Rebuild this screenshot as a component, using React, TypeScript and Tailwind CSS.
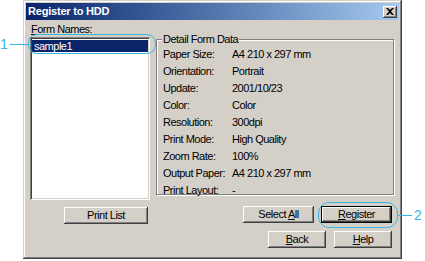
import React from 'react';

const rows: [string, string][] = [
  ['Paper Size:', 'A4 210 x 297 mm'],
  ['Orientation:', 'Portrait'],
  ['Update:', '2001/10/23'],
  ['Color:', 'Color'],
  ['Resolution:', '300dpi'],
  ['Print Mode:', 'High Quality'],
  ['Zoom Rate:', '100%'],
  ['Output Paper:', 'A4 210 x 297 mm'],
  ['Print Layout:', '-'],
];

const raised =
  'shadow-[inset_-1px_-1px_#404040,inset_1px_1px_#ffffff,inset_-2px_-2px_#808080,inset_2px_2px_#d4d0c8]';

function Button({ children, className = '', def = false }: { children: React.ReactNode; className?: string; def?: boolean }) {
  return (
    <div className={`${def ? 'p-px bg-black' : ''} ${className}`}>
      <div className={`h-full w-full bg-[#d4d0c8] flex items-center justify-center text-[11px] tracking-[-0.5px] text-black ${raised}`}>
        {children}
      </div>
    </div>
  );
}

export default function App() {
  return (
    <div
      className="relative w-[425px] h-[261px] bg-white overflow-hidden pl-[23px]"
      style={{ fontFamily: '"Liberation Sans", Arial, sans-serif' }}
    >
      {/* window */}
      <div className="w-[379px] h-[259px] bg-[#d4d0c8] p-[3px] shadow-[inset_-1px_-1px_#404040,inset_1px_1px_#d4d0c8,inset_-2px_-2px_#808080,inset_2px_2px_#ffffff]">
        <div className="h-[17px] flex items-center justify-between pl-[2px] pr-[2px] bg-gradient-to-r from-[#0a246a] to-[#a6caf0]">
          <span className="text-white font-bold text-[11px] tracking-[-0.2px]">Register to HDD</span>
          <div className={`w-[14px] h-[12px] bg-[#d4d0c8] flex items-center justify-center ${raised}`}>
            <svg width="8" height="7" viewBox="0 0 8 7">
              <path d="M0 0h2l2 2 2-2h2L5 3.5 8 7H6L4 5 2 7H0l3-3.5z" fill="#000" />
            </svg>
          </div>
        </div>

        <div className="flex pl-[4px] pt-[3px] tracking-[-0.5px]">
          {/* left column */}
          <div className="w-[120px] flex flex-col">
            <div className="text-[11px] leading-[13px] h-[14px] ml-px">
              <span className="underline">F</span>orm Names:
            </div>
            <div className="h-[163px] bg-white p-[2px] shadow-[inset_1px_1px_#808080,inset_-1px_-1px_#ffffff,inset_2px_2px_#404040,inset_-2px_-2px_#d4d0c8]">
              <div className="h-[12px] bg-[#0a246a] text-white text-[11px] leading-[12px] pl-[2px] mt-px">sample1</div>
            </div>
            <Button className="h-[17px] w-[84px] mt-[7px] self-end mr-[2px]">Print List</Button>
          </div>

          {/* right column */}
          <div className="ml-[6px] w-[238px] flex flex-col pt-[16px]">
            <div className="relative h-[156px] border border-[#808080] shadow-[inset_1px_1px_#ffffff,1px_1px_#ffffff] pt-[6px] pl-[6px]">
              <span className="absolute -top-[7px] left-[5px] px-px bg-[#d4d0c8] text-[11px] leading-[13px]">
                Detail Form Data
              </span>
              {rows.map(([k, v]) => (
                <div key={k} className="flex h-[17px] items-center text-[11px]">
                  <span className="w-[69px]">{k}</span>
                  <span>{v}</span>
                </div>
              ))}
            </div>
            <div className="flex justify-end gap-[7px] mt-[11px] mr-[2px]">
              <Button className="h-[17px] w-[71px]">
                <span>
                  Select <span className="underline">A</span>ll
                </span>
              </Button>
              <Button def className="h-[17px] w-[71px]">
                <span>
                  <span className="underline">R</span>egister
                </span>
              </Button>
            </div>
          </div>
        </div>

        <div className="flex justify-end gap-[8px] mt-[7px] mr-[7px]">
          <Button className="h-[17px] w-[58px]">
            <span>
              <span className="underline">B</span>ack
            </span>
          </Button>
          <Button className="h-[17px] w-[58px]">
            <span>
              <span className="underline">H</span>elp
            </span>
          </Button>
        </div>
      </div>

      {/* callouts */}
      <div className="absolute left-[28px] top-[34px] w-[128px] h-[20px] border border-[#3ab6e6] rounded-[9px]" />
      <div className="absolute left-[10px] top-[44px] w-[18px] h-px bg-[#3ab6e6]" />
      <span className="absolute left-0 top-[36px] text-[14px] leading-[16px] text-[#3ab6e6]">1</span>

      <div className="absolute left-[318px] top-[202px] w-[80px] h-[26px] border border-[#3ab6e6] rounded-[11px]" />
      <div className="absolute left-[398px] top-[215px] w-[14px] h-px bg-[#3ab6e6]" />
      <span className="absolute left-[414px] top-[207px] text-[14px] leading-[16px] text-[#3ab6e6]">2</span>
    </div>
  );
}
